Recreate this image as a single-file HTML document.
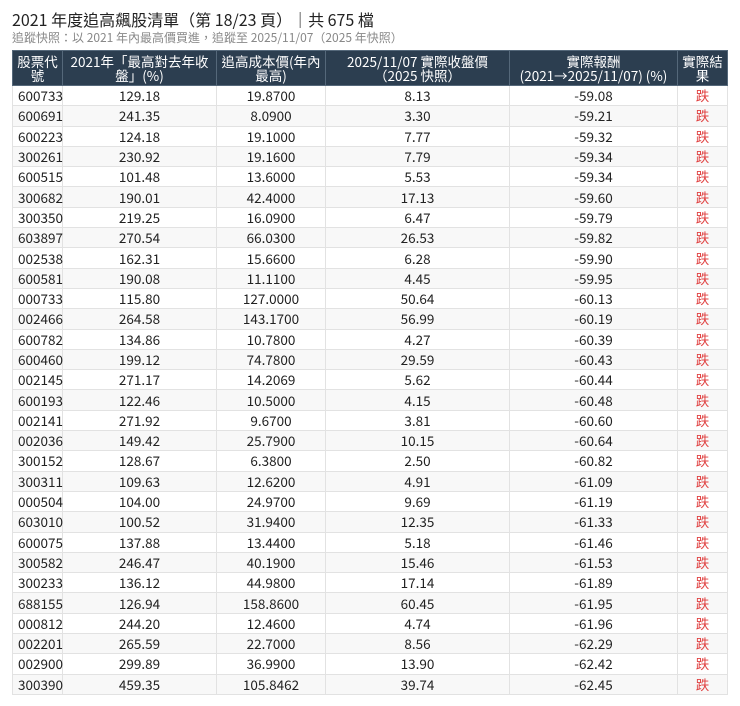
<!DOCTYPE html>
<html><head><meta charset="utf-8"><style>
body{margin:0;background:#fff;font-family:"Liberation Sans","Noto Sans CJK TC",sans-serif;color:#222;}
.t{position:absolute;left:12px;top:7px;font-size:16px;font-family:"Noto Sans CJK TC",sans-serif;color:#222;}
.s{position:absolute;left:12px;top:29px;font-size:12px;font-family:"Noto Sans CJK TC",sans-serif;color:#888;}
table{position:absolute;left:12px;top:50px;border-collapse:collapse;width:715px;font-family:"Noto Sans CJK TC",sans-serif;font-size:13.5px;table-layout:fixed;}
th{background:#2c3e50;color:#fff;font-weight:normal;line-height:14px;height:34px;padding:0 4px;border:1px solid #55687a;font-size:13.5px;}
td{height:19.3px;padding:0 5px;border:1px solid #e2e2e2;text-align:center;line-height:19px;}
td:first-child{text-align:left;}
tr:nth-child(even) td{background:#f8f8f8;}
td.r{color:#e04040;}
</style></head><body>
<div class="t">2021 年度追高飆股清單（第 18/23 頁）｜共 675 檔</div>
<div class="s">追蹤快照：以 2021 年內最高價買進，追蹤至 2025/11/07（2025 年快照）</div>
<table>
<colgroup><col style="width:50px"><col style="width:154px"><col style="width:109px"><col style="width:184px"><col style="width:168px"><col style="width:50px"></colgroup>
<thead><tr><th>股票代號</th><th>2021年「最高對去年收盤」(%)</th><th>追高成本價(年內最高)</th><th>2025/11/07 實際收盤價（2025 快照）</th><th>實際報酬<br>(2021→2025/11/07) (%)</th><th>實際結果</th></tr></thead>
<tbody>
<tr><td>600733</td><td>129.18</td><td>19.8700</td><td>8.13</td><td>-59.08</td><td class="r">跌</td></tr>
<tr><td>600691</td><td>241.35</td><td>8.0900</td><td>3.30</td><td>-59.21</td><td class="r">跌</td></tr>
<tr><td>600223</td><td>124.18</td><td>19.1000</td><td>7.77</td><td>-59.32</td><td class="r">跌</td></tr>
<tr><td>300261</td><td>230.92</td><td>19.1600</td><td>7.79</td><td>-59.34</td><td class="r">跌</td></tr>
<tr><td>600515</td><td>101.48</td><td>13.6000</td><td>5.53</td><td>-59.34</td><td class="r">跌</td></tr>
<tr><td>300682</td><td>190.01</td><td>42.4000</td><td>17.13</td><td>-59.60</td><td class="r">跌</td></tr>
<tr><td>300350</td><td>219.25</td><td>16.0900</td><td>6.47</td><td>-59.79</td><td class="r">跌</td></tr>
<tr><td>603897</td><td>270.54</td><td>66.0300</td><td>26.53</td><td>-59.82</td><td class="r">跌</td></tr>
<tr><td>002538</td><td>162.31</td><td>15.6600</td><td>6.28</td><td>-59.90</td><td class="r">跌</td></tr>
<tr><td>600581</td><td>190.08</td><td>11.1100</td><td>4.45</td><td>-59.95</td><td class="r">跌</td></tr>
<tr><td>000733</td><td>115.80</td><td>127.0000</td><td>50.64</td><td>-60.13</td><td class="r">跌</td></tr>
<tr><td>002466</td><td>264.58</td><td>143.1700</td><td>56.99</td><td>-60.19</td><td class="r">跌</td></tr>
<tr><td>600782</td><td>134.86</td><td>10.7800</td><td>4.27</td><td>-60.39</td><td class="r">跌</td></tr>
<tr><td>600460</td><td>199.12</td><td>74.7800</td><td>29.59</td><td>-60.43</td><td class="r">跌</td></tr>
<tr><td>002145</td><td>271.17</td><td>14.2069</td><td>5.62</td><td>-60.44</td><td class="r">跌</td></tr>
<tr><td>600193</td><td>122.46</td><td>10.5000</td><td>4.15</td><td>-60.48</td><td class="r">跌</td></tr>
<tr><td>002141</td><td>271.92</td><td>9.6700</td><td>3.81</td><td>-60.60</td><td class="r">跌</td></tr>
<tr><td>002036</td><td>149.42</td><td>25.7900</td><td>10.15</td><td>-60.64</td><td class="r">跌</td></tr>
<tr><td>300152</td><td>128.67</td><td>6.3800</td><td>2.50</td><td>-60.82</td><td class="r">跌</td></tr>
<tr><td>300311</td><td>109.63</td><td>12.6200</td><td>4.91</td><td>-61.09</td><td class="r">跌</td></tr>
<tr><td>000504</td><td>104.00</td><td>24.9700</td><td>9.69</td><td>-61.19</td><td class="r">跌</td></tr>
<tr><td>603010</td><td>100.52</td><td>31.9400</td><td>12.35</td><td>-61.33</td><td class="r">跌</td></tr>
<tr><td>600075</td><td>137.88</td><td>13.4400</td><td>5.18</td><td>-61.46</td><td class="r">跌</td></tr>
<tr><td>300582</td><td>246.47</td><td>40.1900</td><td>15.46</td><td>-61.53</td><td class="r">跌</td></tr>
<tr><td>300233</td><td>136.12</td><td>44.9800</td><td>17.14</td><td>-61.89</td><td class="r">跌</td></tr>
<tr><td>688155</td><td>126.94</td><td>158.8600</td><td>60.45</td><td>-61.95</td><td class="r">跌</td></tr>
<tr><td>000812</td><td>244.20</td><td>12.4600</td><td>4.74</td><td>-61.96</td><td class="r">跌</td></tr>
<tr><td>002201</td><td>265.59</td><td>22.7000</td><td>8.56</td><td>-62.29</td><td class="r">跌</td></tr>
<tr><td>002900</td><td>299.89</td><td>36.9900</td><td>13.90</td><td>-62.42</td><td class="r">跌</td></tr>
<tr><td>300390</td><td>459.35</td><td>105.8462</td><td>39.74</td><td>-62.45</td><td class="r">跌</td></tr>
</tbody></table>
</body></html>
